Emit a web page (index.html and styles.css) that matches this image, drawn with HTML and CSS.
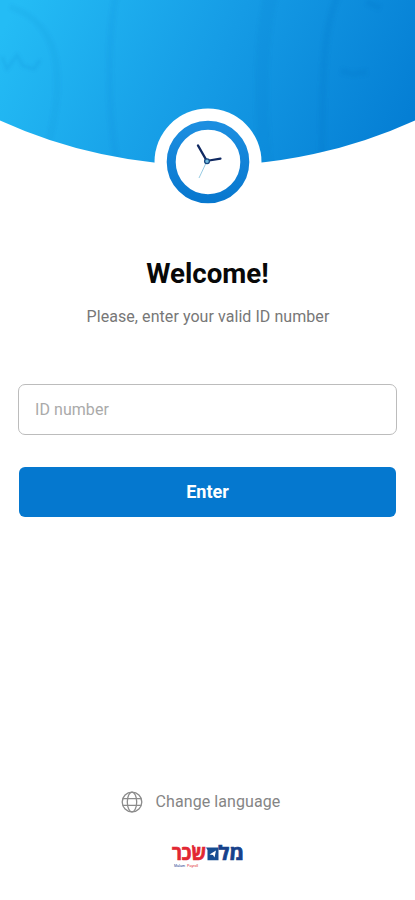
FILE: index.html
```html
<!DOCTYPE html>
<html lang="en">
<head>
<meta charset="utf-8">
<meta name="viewport" content="width=device-width, initial-scale=1">
<title>Welcome</title>
<link rel="stylesheet" href="styles.css">
</head>
<body>
<main class="screen">
  <header class="hero">
    <svg class="hero-art" viewBox="0 0 415 210" aria-hidden="true">
      <defs>
        <linearGradient id="sky" gradientUnits="userSpaceOnUse" x1="15" y1="5" x2="385" y2="190">
          <stop offset="0" stop-color="#24bcf5"/>
          <stop offset=".5" stop-color="#159be5"/>
          <stop offset="1" stop-color="#047dd3"/>
        </linearGradient>
        <linearGradient id="ring" x1="0" y1="0" x2="0" y2="1">
          <stop offset="0" stop-color="#1c8ee0"/>
          <stop offset="1" stop-color="#0878cf"/>
        </linearGradient>
        <clipPath id="dome"><path d="M0 0H415V120.500A501 501 0 0 1 0 120.500Z"/></clipPath>
        <filter id="soft" x="-10%" y="-10%" width="120%" height="120%"><feGaussianBlur stdDeviation="1.800"/></filter>
      </defs>
      <g clip-path="url(#dome)">
        <path d="M0 0H415V210H0Z" fill="url(#sky)"/>
        <g filter="url(#soft)" fill="none" stroke="#0874c6">
          <path d="M10 7C42 17 57 44 57 78C58 99 54 121 49 141" stroke-width="6" opacity=".07"/>
          <path d="M116 -5C108 32 107 105 116 158" stroke-width="6" opacity=".08"/>
          <path d="M271 -5C261 35 260 98 265 165" stroke-width="14" opacity=".09"/>
          <path d="M338 -5C321 34 323 86 322 156" stroke-width="7" opacity=".16"/>
          <path d="M2 57L7 69L17 55L23 66L34 69L40 60" stroke-width="3" opacity=".13"/>
          <path d="M341 71L353 74L367 72M367 2L380 8" stroke-width="6" opacity=".18"/>
        </g>
      </g>
      <circle cx="208" cy="162" r="53.500" fill="#fff"/>
      <circle cx="208" cy="162" r="36.800" fill="#fff" stroke="url(#ring)" stroke-width="9"/>
      <path d="M206.500 162L199 178" stroke="#8bc5df" stroke-width=".9"/>
      <path d="M206 159.500L198 145.500" stroke="#102961" stroke-width="2.400" stroke-linecap="round"/>
      <path d="M209 160.500L220.500 158.700" stroke="#102961" stroke-width="2.200" stroke-linecap="round"/>
      <circle cx="207" cy="161.300" r="2.400" fill="#71b9dc" stroke="#174881" stroke-width="1.300"/>
    </svg>
  </header>
  <section class="intro">
    <h1>Welcome!</h1>
    <p>Please, enter your valid ID number</p>
  </section>
  <form class="login">
    <input class="id-field" type="text" placeholder="ID number" aria-label="ID number">
    <button class="enter" type="button">Enter</button>
  </form>
  <footer class="footer">
    <a class="language">
      <svg class="globe" viewBox="0 0 22 22" aria-hidden="true">
        <circle cx="11" cy="11" r="9.800"/>
        <ellipse cx="11" cy="11" rx="4.700" ry="9.800"/>
        <path d="M1.800 7.700H20.200M1.800 14.300H20.200"/>
      </svg>
      <span>Change language</span>
    </a>
    <svg class="brand" viewBox="0 0 76 34">
      <text class="brand-main red" x="2" y="21" textLength="34" lengthAdjust="spacingAndGlyphs">שׂכר</text>
      <text class="brand-main navy" x="48" y="21" textLength="26" lengthAdjust="spacingAndGlyphs">מל</text>
      <path d="M36 8.500H48.500V21.300H37.500V11Z" fill="#164c91"/>
      <path d="M39.500 15.500L46 11.500L44.500 18.500L43 16Z" fill="#fff"/>
      <text class="brand-sub navy" x="4" y="27.500" textLength="11" lengthAdjust="spacingAndGlyphs">Malam</text>
      <text class="brand-sub red" x="17" y="27.500" textLength="11" lengthAdjust="spacingAndGlyphs">Payroll</text>
    </svg>
  </footer>
</main>
</body>
</html>
```
FILE: styles.css
```css
* { box-sizing: border-box; }
body { margin: 0; background: #fff; font-family: Roboto, "Liberation Sans", sans-serif; }
.screen { width: 100%; max-width: 415px; height: 900px; display: flex; flex-direction: column; }
.hero, .hero-art { display: block; width: 100%; height: 210px; }
.intro { padding-top: 46px; text-align: center; }
h1 { margin: 0; font-size: 27.7px; line-height: 36px; font-weight: 700; color: #080808; }
.intro p { margin: 15px 0 0 1px; font-size: 16px; line-height: 20px; letter-spacing: .06px; color: #777; }
.login { display: flex; flex-direction: column; gap: 32px; padding: 57px 18px 0; }
.id-field { width: 100%; height: 51px; padding: 0 16px 1px; border: 1px solid #bcbcbc; border-radius: 7px; background: #fff; font: 16px Roboto, sans-serif; letter-spacing: .06px; outline: none; }
.id-field::placeholder { color: #aaa; opacity: 1; }
.enter { height: 50px; margin: 0 1px; padding: 0 0 1px; border: 0; border-radius: 6px; background: #0578cf; color: #fff; font: 700 18px Roboto, sans-serif; }
.footer { margin-top: auto; padding-bottom: 27px; display: flex; flex-direction: column; align-items: center; gap: 26px; }
.language { display: flex; align-items: center; gap: 13px; margin-right: 14px; color: #858585; font-size: 16px; line-height: 22px; letter-spacing: .08px; }
.globe { width: 22px; height: 22px; fill: none; stroke: #8c8c8c; stroke-width: 1.3; }
.brand { width: 76px; height: 34px; overflow: visible; }
.brand-main { font: 700 20px "Open Sans", "DejaVu Sans", sans-serif; stroke-width: .7px; }
.brand-main.red { stroke: #e22732; }
.brand-main.navy { stroke: #17418b; }
.brand-sub { font: 4px "Liberation Sans", sans-serif; }
.red { fill: #e22732; }
.navy { fill: #17418b; }
```
